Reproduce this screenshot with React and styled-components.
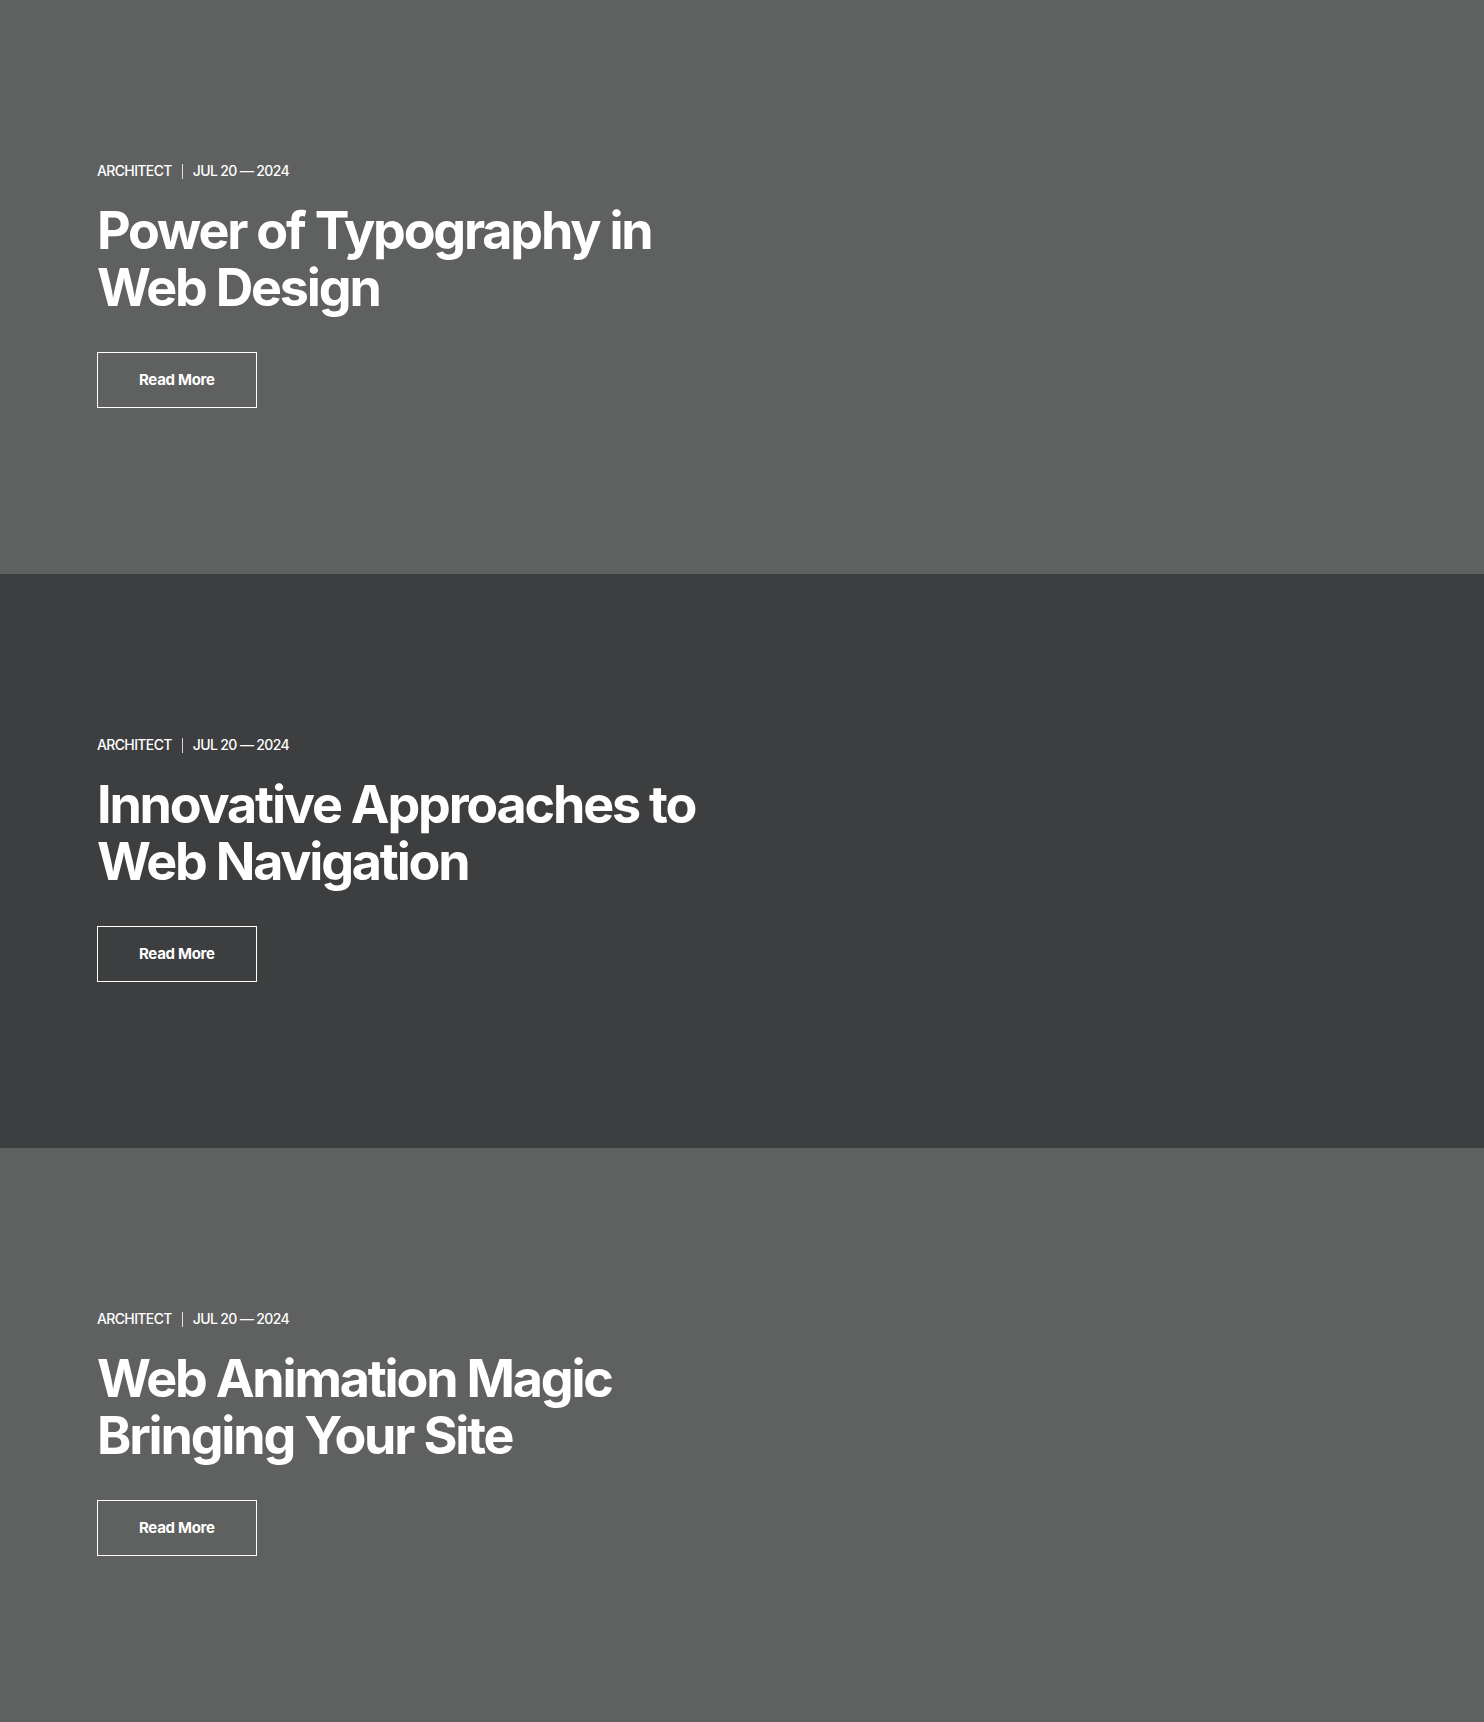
import React from 'react'
import styled, { createGlobalStyle } from 'styled-components'

const GlobalStyle = createGlobalStyle`
  html, body {
    margin: 0;
    padding: 0;
    background: #5f6160;
  }
  body {
    font-family: Inter, "Noto Sans", sans-serif;
    -webkit-font-smoothing: antialiased;
  }
`

const posts = [
  { id: 1, tag: 'ARCHITECT', date: 'JUL 20 — 2024', title: 'Power of Typography in Web Design', tone: 'light' },
  { id: 2, tag: 'ARCHITECT', date: 'JUL 20 — 2024', title: 'Innovative Approaches to Web Navigation', tone: 'dark' },
  { id: 3, tag: 'ARCHITECT', date: 'JUL 20 — 2024', title: 'Web Animation Magic Bringing Your Site', tone: 'light' },
]

const App = () => (
  <>
    <GlobalStyle />
    <Page>
      {posts.map(post => (
        <Slide key={post.id} tone={post.tone}>
          <Content>
            <Meta>
              <span>{post.tag}</span>
              <Divider />
              <span>{post.date}</span>
            </Meta>
            <Title>{post.title}</Title>
            <ReadMore href="#">Read More</ReadMore>
          </Content>
        </Slide>
      ))}
    </Page>
  </>
)

const Page = styled.main`
  display: flex;
  flex-direction: column;
`
const Slide = styled.section`
  height: 574px;
  box-sizing: border-box;
  padding: 161px 97px 0;
  background: ${({ tone }) => (tone === 'dark' ? '#3d3e40' : '#5f6160')};
  color: #fff;
`
const Content = styled.div`
  display: flex;
  flex-direction: column;
  align-items: flex-start;
  max-width: 640px;
`
const Meta = styled.div`
  display: flex;
  align-items: center;
  gap: 10px;
  font-size: 14px;
  line-height: 20px;
  font-weight: 500;
  letter-spacing: -0.045em;
  text-transform: uppercase;
`
const Divider = styled.i`
  display: block;
  width: 1px;
  height: 15px;
  background: rgba(255, 255, 255, 0.8);
`
const Title = styled.h2`
  margin: 21px 0 0;
  font-size: 52px;
  line-height: 57px;
  font-weight: 700;
  letter-spacing: -0.042em;
`
const ReadMore = styled.a`
  margin-top: 36px;
  display: inline-block;
  padding: 17px 41px;
  border: 1px solid #fff;
  color: #fff;
  text-decoration: none;
  font-size: 15px;
  line-height: 20px;
  font-weight: 700;
  letter-spacing: -0.02em;
`

export default App
